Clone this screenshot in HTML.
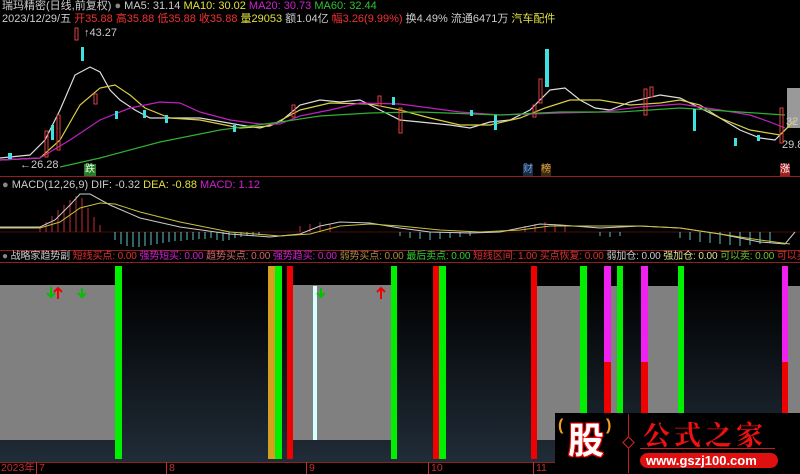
<!DOCTYPE html>
<html><head><meta charset="utf-8"><style>
*{margin:0;padding:0}
body{width:800px;height:473px;background:#000;position:relative;overflow:hidden;font-family:"Liberation Sans","Noto Sans CJK SC",sans-serif;font-size:11px;white-space:nowrap}
.t{position:absolute;line-height:12px}
.b{position:absolute}
</style></head><body>
<div class="t" style="left:2px;top:0;color:#ccc">瑞玛精密(日线,前复权) <span style="color:#888">●</span> MA5: 31.14 <span style="color:#e0e040">MA10: 30.02</span> <span style="color:#d020d0">MA20: 30.73</span> <span style="color:#30c030">MA60: 32.44</span></div>
<div class="t" style="left:2px;top:13px;color:#ccc">2023/12/29/五 <span style="color:#f03030">开35.88 高35.88 低35.88 收35.88</span> <span style="color:#e0e040">量29053</span> 额1.04亿 <span style="color:#f03030">幅3.26(9.99%)</span> 换4.49% 流通6471万 <span style="color:#e0e040">汽车配件</span></div>
<div class="t" style="left:84px;top:27px;color:#ccc">↑43.27</div>
<div class="t" style="left:20px;top:159px;color:#ccc">←26.28</div>
<div class="t" style="left:84px;top:164px;background:#2a7a2a;color:#dfd;font-size:10px;padding:0 1px">跌</div>
<div class="t" style="left:523px;top:164px;color:#6aa0e0;font-size:10px;background:#1a2a40">财</div>
<div class="t" style="left:541px;top:164px;color:#e0a040;font-size:10px;background:#3a2a10">榜</div>
<div class="t" style="left:780px;top:164px;color:#fff;font-size:10px;background:#a02020">涨</div>
<div class="b" style="left:787px;top:88px;width:13px;height:40px;background:#999"></div>
<div class="t" style="left:786px;top:116px;color:#ccc">32</div>
<div class="t" style="left:782px;top:139px;color:#ccc">29.8</div>
<div class="b" style="left:0;top:176px;width:800px;height:1px;background:#902020"></div>
<svg class="b" style="left:0;top:0" width="800" height="250">
<g fill="none" stroke-width="1.2">
<polyline stroke="#ddd" points="0,158 30,155 45,140 60,110 75,75 90,67 100,72 110,90 120,100 135,110 150,118 165,118 200,118 240,125 260,128 280,122 300,105 320,100 340,102 360,100 380,110 400,120 420,122 450,125 470,128 490,122 510,120 530,110 550,90 565,88 580,100 595,108 610,110 630,102 660,95 680,98 700,108 720,118 740,130 760,138 775,140 790,125"/>
<polyline stroke="#d8d040" points="0,160 40,158 60,140 80,105 100,88 115,85 130,95 145,108 170,118 200,120 240,128 270,126 300,110 330,103 370,104 400,110 430,118 460,125 490,125 520,118 545,108 570,100 600,100 630,105 660,103 680,100 700,105 720,118 750,130 780,135 795,120"/>
<polyline stroke="#c020c0" points="0,160 40,158 70,140 100,120 130,108 160,102 180,103 200,112 230,120 260,124 280,124 300,116 330,110 360,103 400,104 430,108 460,112 500,115 530,114 560,113 600,112 640,107 680,104 720,110 750,115 770,122 785,128"/>
<polyline stroke="#30b030" points="60,167 100,158 160,142 220,130 280,122 320,116 370,113 420,112 500,115 560,112 620,112 680,108 740,112 785,115"/>
</g>
<g stroke="#e04040" fill="none">
<rect x="75" y="28" width="3" height="12"/><rect x="45" y="131" width="3" height="26"/><rect x="57" y="115" width="3" height="35"/><rect x="94" y="94" width="3" height="10"/><rect x="378" y="96" width="3" height="10"/><rect x="399" y="108" width="3" height="25"/><rect x="539" y="79" width="3" height="24"/><rect x="533" y="105" width="3" height="12"/><rect x="644" y="89" width="3" height="26"/><rect x="650" y="87" width="3" height="10"/><rect x="292" y="105" width="3" height="12"/><rect x="780" y="108" width="3" height="35"/>
</g>
<g fill="#40e0e0">
<rect x="81" y="47" width="3" height="14"/><rect x="51" y="125" width="3" height="15"/><rect x="115" y="111" width="3" height="8"/><rect x="143" y="110" width="3" height="8"/><rect x="545" y="49" width="4" height="38"/><rect x="494" y="115" width="3" height="15"/><rect x="392" y="97" width="3" height="8"/><rect x="693" y="109" width="3" height="22"/><rect x="734" y="138" width="3" height="8"/><rect x="8" y="153" width="4" height="6"/><rect x="165" y="115" width="3" height="8"/><rect x="233" y="125" width="3" height="7"/><rect x="470" y="110" width="3" height="6"/><rect x="757" y="135" width="3" height="6"/>
</g>
<g stroke="#c03030">
<line x1="40" y1="232" x2="40" y2="228"/><line x1="46" y1="232" x2="46" y2="222"/><line x1="52" y1="232" x2="52" y2="216"/><line x1="58" y1="232" x2="58" y2="210"/><line x1="64" y1="232" x2="64" y2="205"/><line x1="70" y1="232" x2="70" y2="200"/><line x1="76" y1="232" x2="76" y2="196"/><line x1="82" y1="232" x2="82" y2="198"/><line x1="88" y1="232" x2="88" y2="208"/><line x1="94" y1="232" x2="94" y2="217"/><line x1="100" y1="232" x2="100" y2="225"/><line x1="300" y1="232" x2="300" y2="226"/><line x1="310" y1="232" x2="310" y2="224"/><line x1="320" y1="232" x2="320" y2="222"/><line x1="330" y1="232" x2="330" y2="224"/><line x1="525" y1="232" x2="525" y2="226"/><line x1="535" y1="232" x2="535" y2="224"/><line x1="545" y1="232" x2="545" y2="222"/><line x1="555" y1="232" x2="555" y2="224"/><line x1="565" y1="232" x2="565" y2="226"/>
</g>
<line x1="0" y1="232" x2="800" y2="232" stroke="#902020" stroke-width="0.6"/>
<g stroke="#60c8c8">
<line x1="115" y1="232" x2="115" y2="240"/><line x1="121" y1="232" x2="121" y2="244"/><line x1="127" y1="232" x2="127" y2="246"/><line x1="133" y1="232" x2="133" y2="247"/><line x1="139" y1="232" x2="139" y2="247"/><line x1="145" y1="232" x2="145" y2="246"/><line x1="151" y1="232" x2="151" y2="245"/><line x1="157" y1="232" x2="157" y2="244"/><line x1="163" y1="232" x2="163" y2="243"/><line x1="169" y1="232" x2="169" y2="242"/><line x1="175" y1="232" x2="175" y2="241"/><line x1="181" y1="232" x2="181" y2="241"/><line x1="187" y1="232" x2="187" y2="240"/><line x1="193" y1="232" x2="193" y2="240"/><line x1="199" y1="232" x2="199" y2="239"/><line x1="205" y1="232" x2="205" y2="239"/><line x1="211" y1="232" x2="211" y2="238"/><line x1="217" y1="232" x2="217" y2="240"/><line x1="223" y1="232" x2="223" y2="241"/><line x1="229" y1="232" x2="229" y2="240"/><line x1="235" y1="232" x2="235" y2="238"/><line x1="241" y1="232" x2="241" y2="237"/><line x1="247" y1="232" x2="247" y2="236"/><line x1="253" y1="232" x2="253" y2="236"/><line x1="259" y1="232" x2="259" y2="235"/><line x1="400" y1="232" x2="400" y2="236"/><line x1="410" y1="232" x2="410" y2="238"/><line x1="420" y1="232" x2="420" y2="239"/><line x1="430" y1="232" x2="430" y2="240"/><line x1="440" y1="232" x2="440" y2="239"/><line x1="450" y1="232" x2="450" y2="238"/><line x1="460" y1="232" x2="460" y2="237"/><line x1="470" y1="232" x2="470" y2="236"/><line x1="600" y1="232" x2="600" y2="236"/><line x1="610" y1="232" x2="610" y2="237"/><line x1="620" y1="232" x2="620" y2="236"/><line x1="680" y1="232" x2="680" y2="238"/><line x1="690" y1="232" x2="690" y2="240"/><line x1="700" y1="232" x2="700" y2="242"/><line x1="710" y1="232" x2="710" y2="243"/><line x1="720" y1="232" x2="720" y2="244"/><line x1="730" y1="232" x2="730" y2="245"/><line x1="740" y1="232" x2="740" y2="246"/><line x1="750" y1="232" x2="750" y2="245"/><line x1="760" y1="232" x2="760" y2="244"/><line x1="770" y1="232" x2="770" y2="243"/>
</g>
<g fill="none" stroke-width="1">
<polyline stroke="#ccc" points="0,227 40,227 55,220 70,205 80,194 90,194 110,205 140,218 180,227 230,234 270,237 300,234 320,226 340,222 370,223 400,228 430,232 470,233 500,232 520,228 540,224 560,225 600,228 640,226 680,228 720,234 760,242 785,244 795,232"/>
<polyline stroke="#c8c040" points="0,228 40,228 60,222 80,208 100,203 115,204 140,212 180,222 230,232 280,236 310,234 340,226 370,224 400,226 440,230 480,232 520,230 550,226 600,226 640,226 680,228 720,234 760,240 790,244"/>
</g>
</svg>
<div class="t" style="left:2px;top:179px;color:#ccc"><span style="color:#888">●</span> MACD(12,26,9) DIF: -0.32 <span style="color:#e0e040">DEA: -0.88</span> <span style="color:#d020d0">MACD: 1.12</span></div>
<div class="b" style="left:0;top:250px;width:800px;height:1px;background:#902020"></div>
<div class="b" style="left:0;top:262px;width:800px;height:200px;background:linear-gradient(#000,#000 10%,#202c38)"></div>
<div class="b" style="left:0;top:262px;width:800px;height:1px;background:#902020"></div>
<div class="t" style="left:2px;top:251px;color:#ccc;font-size:10px;letter-spacing:-0.1px"><span style="color:#888">●</span> 战略家趋势副 <span style="color:#e03030">短线买点: 0.00</span> <span style="color:#d020d0">强势短买: 0.00</span> <span style="color:#d06868">趋势买点: 0.00</span> <span style="color:#d020d0">强势趋买: 0.00</span> <span style="color:#b08840">弱势买点: 0.00</span> <span style="color:#30d030">最后卖点: 0.00</span> <span style="color:#e03030">短线区间: 1.00</span> <span style="color:#e03030">买点恢复: 0.00</span> <span style="color:#ccc">弱加仓: 0.00</span> <span style="color:#e0e090">强加仓: 0.00</span> <span style="color:#70c030">可以卖: 0.00</span> <span style="color:#e03030">可以买</span></div>
<div class="b" style="left:0;top:285px;width:115px;height:155px;background:#808080"></div>
<div class="b" style="left:293px;top:285px;width:98px;height:155px;background:#808080"></div>
<div class="b" style="left:537px;top:286px;width:43px;height:154px;background:#808080"></div>
<div class="b" style="left:611px;top:286px;width:6px;height:154px;background:#808080"></div>
<div class="b" style="left:648px;top:286px;width:30px;height:154px;background:#808080"></div>
<div class="b" style="left:788px;top:286px;width:12px;height:154px;background:#808080"></div>
<div class="b" style="left:115px;top:266px;width:7px;height:193px;background:#00f000"></div>
<div class="b" style="left:268px;top:266px;width:7px;height:193px;background:#d4a020"></div>
<div class="b" style="left:275px;top:266px;width:7px;height:193px;background:#00f000"></div>
<div class="b" style="left:287px;top:266px;width:6px;height:193px;background:#f00000"></div>
<div class="b" style="left:313px;top:286px;width:4px;height:154px;background:#d8ffff"></div>
<div class="b" style="left:391px;top:266px;width:6px;height:193px;background:#00f000"></div>
<div class="b" style="left:433px;top:266px;width:6px;height:193px;background:#f00000"></div>
<div class="b" style="left:439px;top:266px;width:7px;height:193px;background:#00f000"></div>
<div class="b" style="left:531px;top:266px;width:6px;height:193px;background:#f00000"></div>
<div class="b" style="left:580px;top:266px;width:7px;height:193px;background:#00f000"></div>
<div class="b" style="left:604px;top:266px;width:7px;height:96px;background:#f020f0"></div>
<div class="b" style="left:604px;top:362px;width:7px;height:97px;background:#f00000"></div>
<div class="b" style="left:617px;top:266px;width:6px;height:193px;background:#00f000"></div>
<div class="b" style="left:641px;top:266px;width:7px;height:96px;background:#f020f0"></div>
<div class="b" style="left:641px;top:362px;width:7px;height:97px;background:#f00000"></div>
<div class="b" style="left:678px;top:266px;width:6px;height:193px;background:#00f000"></div>
<div class="b" style="left:782px;top:266px;width:6px;height:96px;background:#f020f0"></div>
<div class="b" style="left:782px;top:362px;width:6px;height:97px;background:#f00000"></div>
<svg class="b" style="left:0;top:280px" width="400" height="30">
<g stroke-width="2" fill="none">
<path d="M51 7V17M47 13L51 17L55 13" stroke="#00c000"/>
<path d="M58 19V8M54 12L58 8L62 12" stroke="#f00000"/>
<path d="M82 8V17M78 13L82 17L86 13" stroke="#00c000"/>
<path d="M321 8V17M317 13L321 17L325 13" stroke="#00c000"/>
<path d="M381 19V8M377 12L381 8L385 12" stroke="#f00000"/>
</g></svg>
<div class="b" style="left:0;top:462px;width:800px;height:1px;background:#902020"></div>
<div class="t" style="left:1px;top:462px;color:#c03030;font-size:10.5px">2023年</div>
<div class="t" style="left:36px;top:462px;color:#c03030;font-size:10.5px;border-left:1px solid #c03030;padding-left:2px">7</div>
<div class="t" style="left:166px;top:462px;color:#c03030;font-size:10.5px;border-left:1px solid #c03030;padding-left:2px">8</div>
<div class="t" style="left:306px;top:462px;color:#c03030;font-size:10.5px;border-left:1px solid #c03030;padding-left:2px">9</div>
<div class="t" style="left:428px;top:462px;color:#c03030;font-size:10.5px;border-left:1px solid #c03030;padding-left:2px">10</div>
<div class="t" style="left:533px;top:462px;color:#c03030;font-size:10.5px;border-left:1px solid #c03030;padding-left:2px">11</div>
<div class="b" style="left:555px;top:413px;width:245px;height:60px;background:#000"></div>
<div class="t" style="left:568px;top:421px;font-size:36px;line-height:40px;font-weight:bold;color:#fff;text-shadow:0 0 2px #f00,1px 1px 0 #d00,-1px -1px 0 #d00,1px -1px 0 #d00,-1px 1px 0 #d00">股</div>
<div class="t" style="left:558px;top:420px;color:#f0a020;font-size:16px;font-weight:bold">(</div>
<div class="t" style="left:606px;top:420px;color:#f0a020;font-size:16px;font-weight:bold">)</div>
<div class="b" style="left:628px;top:414px;width:1px;height:59px;background:#c02020"></div>
<div class="b" style="left:624px;top:438px;width:7px;height:7px;border:1px solid #e02020;transform:rotate(45deg);background:#000"></div>
<div class="t" style="left:643px;top:418px;color:#f01010;font-size:27px;line-height:32px;font-weight:bold;letter-spacing:4px;font-family:'Noto Serif CJK SC',serif">公式之家</div>
<div class="b" style="left:640px;top:448px;width:135px;height:1px;background:#c02020"></div>
<div class="b" style="left:640px;top:453px;width:138px;height:15px;border-radius:8px;background:#e01010"></div>
<div class="t" style="left:646px;top:454px;color:#fff;font-size:13px;line-height:14px;font-weight:bold">www.gszj100.com</div>
</body></html>
